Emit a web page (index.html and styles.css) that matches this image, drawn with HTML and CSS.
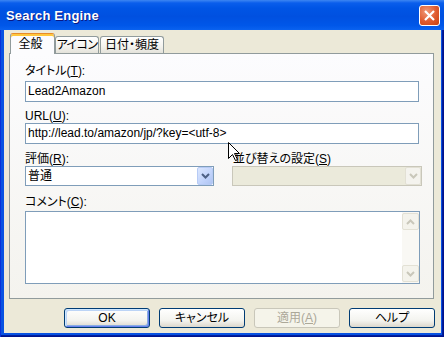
FILE: index.html
```html
<!DOCTYPE html>
<html lang="ja">
<head>
    <meta charset="UTF-8">
    <title>Search Engine</title>
    <link rel="stylesheet" href="styles.css">
</head>
<body>
    <div class="window">
        <div class="titlebar">
            <span class="title">Search Engine</span>
            <div class="close">
                <svg width="19" height="19" viewBox="0 0 19 19"><path d="M5 5 L14 14 M14 5 L5 14" stroke="#fff" stroke-width="2.2" fill="none"/></svg>
            </div>
        </div>
        <div class="client">
            <div class="tabstrip">
                <div class="tab active">全般</div>
                <div class="tab tab2">アイコン</div>
                <div class="tab tab3">日付・頻度</div>
            </div>
            <div class="panel">
                <div class="lbl">タイトル(<u>T</u>):</div>
                <div class="field first">Lead2Amazon</div>
                <div class="lbl url">URL(<u>U</u>):</div>
                <div class="field">http://lead.to/amazon/jp/?key=&lt;utf-8&gt;</div>
                <div class="pair">
                    <div class="col">
                        <div class="lbl">評価(<u>R</u>):</div>
                        <div class="combo">
                            <span class="val">普通</span>
                            <span class="drop"><svg width="9" height="6" viewBox="0 0 9 6"><polyline points="1,1 4.5,4.5 8,1" stroke="#4D6185" stroke-width="2" fill="none"/></svg></span>
                        </div>
                    </div>
                    <div class="col wide">
                        <div class="lbl">並び替えの設定(<u>S</u>)</div>
                        <div class="combo off">
                            <span class="val"></span>
                            <span class="drop"><svg width="9" height="6" viewBox="0 0 9 6"><polyline points="1,1 4.5,4.5 8,1" stroke="#C9C7BA" stroke-width="2" fill="none"/></svg></span>
                        </div>
                    </div>
                </div>
                <div class="lbl memo-lbl">コメント(<u>C</u>):</div>
                <div class="memo">
                    <div class="vscroll">
                        <span class="sbtn"><svg width="9" height="6" viewBox="0 0 9 6"><polyline points="1,5 4.5,1.5 8,5" stroke="#C9C7BA" stroke-width="2" fill="none"/></svg></span>
                        <span class="sbtn"><svg width="9" height="6" viewBox="0 0 9 6"><polyline points="1,1 4.5,4.5 8,1" stroke="#C9C7BA" stroke-width="2" fill="none"/></svg></span>
                    </div>
                </div>
            </div>
            <div class="buttons">
                <div class="btn default">OK</div>
                <div class="btn">キャンセル</div>
                <div class="btn disabled">適用(<u>A</u>)</div>
                <div class="btn">ヘルプ</div>
            </div>
        </div>

        <!-- mouse pointer sitting over the dialog -->
        <svg class="cursor" width="13" height="20" viewBox="0 0 13 20">
            <path d="M0.5 0.5 L0.5 16.5 L4.5 12.5 L7.5 18.5 L9.5 17.5 L6.5 11.5 L11.5 11.5 Z" fill="#fff" stroke="#000" stroke-width="1"/>
        </svg>
    </div>
</body>
</html>
```

FILE: styles.css
```css
html, body {
    margin: 0;
    padding: 0;
}
body {
    width: 444px;
    height: 337px;
    overflow: hidden;
    font-family: "Liberation Sans", "Noto Sans CJK JP", sans-serif;
    font-size: 12px;
    font-feature-settings: "palt";
    color: #000;
}

.window {
    position: relative;
    width: 444px;
    height: 337px;
    box-sizing: border-box;
    display: flex;
    flex-direction: column;
    background: #0852E2;
    box-shadow: inset 1px 0 #0831D9, inset -1px -1px #00138C, inset -2px -2px #001EA0;
}

.titlebar {
    height: 30px;
    flex: none;
    display: flex;
    align-items: center;
    justify-content: space-between;
    padding: 0 4px 0 6px;
    background: linear-gradient(#3D86F2 0, #0A5EEC 3px, #0055E5 8px, #0050E0 55%, #0057E9 85%, #0A62F0 100%);
}
.title {
    color: #fff;
    font-family: "Liberation Sans", sans-serif;
    font-weight: bold;
    font-size: 13px;
    letter-spacing: 0.2px;
    text-shadow: 1px 1px #0A1883;
    margin-top: 1px;
}
.close {
    width: 21px;
    height: 21px;
    box-sizing: border-box;
    border: 1px solid #fff;
    border-radius: 3px;
    background: radial-gradient(circle at 35% 30%, #F09A7A, #DF5A2E 55%, #C8420F);
    display: flex;
    align-items: center;
    justify-content: center;
    margin-top: 1px;
}

.client {
    flex: 1;
    margin: 0 3px 4px 4px;
    background: #ECE9D8;
    padding: 3px 6px 0 5px;
}

.tabstrip {
    display: flex;
    align-items: flex-end;
    height: 20px;
    padding-left: 1px;
}
.tab {
    box-sizing: border-box;
    height: 17px;
    border: 1px solid #919B9C;
    border-bottom: none;
    border-radius: 3px 3px 0 0;
    background: linear-gradient(#FFFFFF, #F5F4F0 55%, #E3E2DA);
    padding-top: 1px;
    line-height: 14px;
    text-align: center;
    white-space: nowrap;
    overflow: hidden;
}
.tab.active {
    width: 45px;
    height: 21px;
    margin-bottom: -1px;
    position: relative;
    z-index: 1;
    padding: 3px 4px 0 0;
    background: #FCFCFE;
    border-top: 1px solid #E68B2C;
    box-shadow: inset 0 2px #FFC73C;
}
.tab2 {
    width: 44px;
    letter-spacing: -0.6px;
}
.tab3 {
    width: 64px;
    margin-left: 1px;
}

.panel {
    box-sizing: border-box;
    width: 425px;
    height: 246px;
    border: 1px solid #919B9C;
    background: linear-gradient(#FCFCFE, #F4F3EE);
    padding: 10px 0 0 15px;
    display: flex;
    flex-direction: column;
    align-items: flex-start;
}

.lbl {
    line-height: 14px;
    white-space: nowrap;
}
.lbl.url {
    margin-top: 7px;
}
.memo-lbl {
    margin-top: 9px;
}

.field {
    box-sizing: border-box;
    width: 394px;
    height: 21px;
    border: 1px solid #7F9DB9;
    background: #fff;
    padding: 0 2px;
    line-height: 19px;
    white-space: nowrap;
}
.field.first {
    margin-top: 3px;
}

.pair {
    display: flex;
    gap: 18px;
    margin-top: 8px;
}
.col {
    width: 189px;
}
.col.wide {
    width: 190px;
}
.col.wide .lbl {
    padding-left: 1px;
}

.combo {
    box-sizing: border-box;
    height: 20px;
    display: flex;
    border: 1px solid #7F9DB9;
    background: #fff;
}
.combo .val {
    flex: 1;
    padding-left: 2px;
    line-height: 18px;
}
.combo .drop {
    box-sizing: border-box;
    width: 16px;
    height: 18px;
    border: 1px solid #B7CBF5;
    border-radius: 2px;
    background: linear-gradient(135deg, #DCE7FE, #C1D3FB 60%, #AFC4F2);
    display: flex;
    align-items: center;
    justify-content: center;
}
.combo.off {
    border-color: #C9C7BA;
    background: #EBEADB;
}
.combo.off .drop {
    border-color: #E2E0D4;
    background: #F4F3EE;
}

.memo {
    box-sizing: border-box;
    width: 395px;
    height: 73px;
    margin-top: 2px;
    border: 1px solid #7F9DB9;
    background: #fff;
    display: flex;
    justify-content: flex-end;
}
.vscroll {
    width: 17px;
    box-sizing: border-box;
    padding: 1px 0;
    background: #F9F8F4;
    display: flex;
    flex-direction: column;
    justify-content: space-between;
}
.sbtn {
    box-sizing: border-box;
    height: 17px;
    border: 1px solid #E3E1D5;
    border-radius: 2px;
    background: #F4F3EC;
    display: flex;
    align-items: center;
    justify-content: center;
}

.buttons {
    display: flex;
    justify-content: flex-end;
    gap: 9px;
    margin-top: 9px;
}
.btn {
    box-sizing: border-box;
    width: 86px;
    height: 20px;
    border: 1px solid #003C74;
    border-radius: 3px;
    background: linear-gradient(#FFFFFF, #F3F3EE 65%, #DCD7CC);
    line-height: 18px;
    text-align: center;
    white-space: nowrap;
}
.btn.default {
    box-shadow: inset 1px 1px #CEE7FF, inset -1px -1px #6982EE, inset 2px 2px #BCD4F6, inset -2px -2px #89ADE4;
}
.btn.disabled {
    border-color: #C9C7BA;
    color: #ACA899;
    background: #F5F4EA;
}

.cursor {
    position: absolute;
    left: 228px;
    top: 142px;
}
```
